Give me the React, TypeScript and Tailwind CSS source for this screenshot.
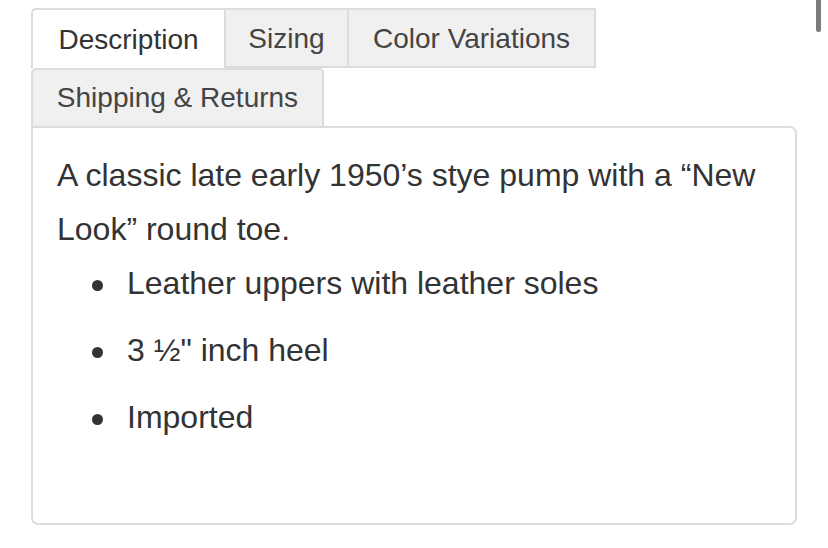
import React from "react";

const tabs = [
  { label: "Description", cls: "w-[193px] rounded-tl-[5px] border-l-2 border-t-2 bg-white text-[#333]" },
  { label: "Sizing", cls: "w-[125px] border-2 bg-[#f0f0f0] text-[#444]" },
  { label: "Color Variations", cls: "w-[247px] border-2 border-l-0 bg-[#f0f0f0] text-[#444]" },
];

const bullets = ["Leather uppers with leather soles", "3 ½\" inch heel", "Imported"];

export default function App() {
  return (
    <div
      className="relative h-[548px] w-[828px] overflow-hidden bg-white pl-[31px] pt-[8px] text-[#333]"
      style={{ fontFamily: '"Liberation Sans", Arial, sans-serif' }}
    >
      {/* scroll indicator */}
      <div className="absolute right-[7px] top-0 h-[32px] w-[5px] rounded-b-full bg-[#7a7a7a]" />

      <div className="w-[766px]">
        <div className="flex">
          {tabs.map((t) => (
            <div
              key={t.label}
              className={`flex h-[60px] items-center justify-center border-[#dcdcdc] text-[28px] ${t.cls}`}
            >
              <span className="mt-[1px]">{t.label}</span>
            </div>
          ))}
        </div>
        <div className="flex">
          <div className="flex h-[58px] w-[293px] items-center justify-center rounded-t-[5px] border-2 border-b-0 border-[#dcdcdc] bg-[#f0f0f0] text-[28px] text-[#444]">
            Shipping &amp; Returns
          </div>
        </div>

        <div className="h-[399px] rounded-b-[7px] rounded-tr-[7px] border-2 border-[#dcdcdc] bg-white pl-[24px] pr-[20px] pt-[20px] text-[32px]">
          <p className="leading-[54px]">
            A classic late early 1950’s stye pump with a “New Look” round toe.
          </p>
          <ul className="flex flex-col gap-[13px] pl-[35px]">
            {bullets.map((b) => (
              <li key={b} className="flex items-center leading-[54px]">
                <span className="mr-[24px] mt-[4px] h-[11px] w-[11px] shrink-0 rounded-full bg-[#333]" />
                <span>{b}</span>
              </li>
            ))}
          </ul>
        </div>
      </div>
    </div>
  );
}
